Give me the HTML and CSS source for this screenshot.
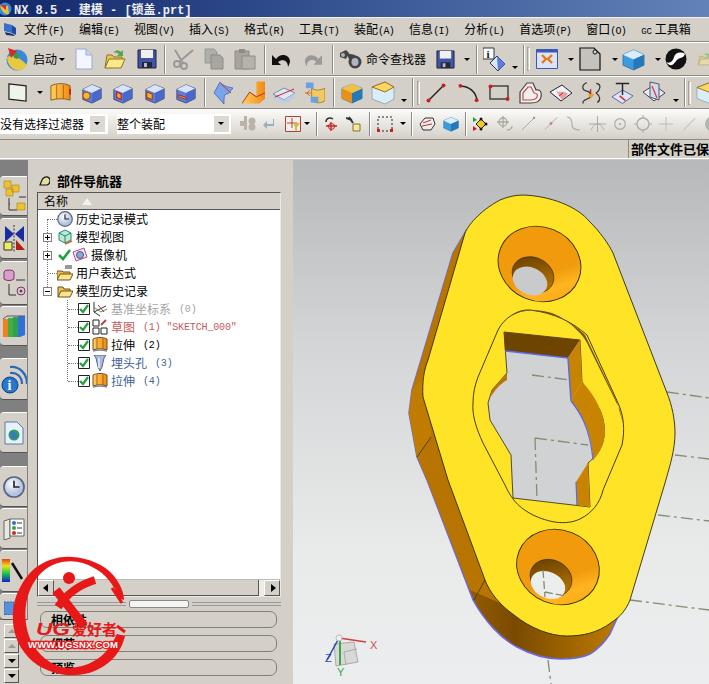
FILE: index.html
```html
<!DOCTYPE html>
<html lang="zh">
<head>
<meta charset="utf-8">
<title>NX 8.5 - 建模 - [锁盖.prt]</title>
<link rel="stylesheet" href="styles.css">
</head>
<body>
<svg class="defs" width="0" height="0">
  <defs>
    <linearGradient id="gFace" x1="0" y1="0" x2="1" y2="1"><stop offset="0" stop-color="#c8dcf8"/><stop offset="1" stop-color="#5f7fe0"/></linearGradient>
    <linearGradient id="gOr" x1="0" y1="0" x2="1" y2="0"><stop offset="0" stop-color="#ffd060"/><stop offset="1" stop-color="#f08a10"/></linearGradient>
    <linearGradient id="gCone" x1="0" y1="0" x2="1" y2="1"><stop offset="0" stop-color="#f09a0c"/><stop offset=".6" stop-color="#f09a0c"/><stop offset=".75" stop-color="#ffb420"/><stop offset="1" stop-color="#f8a010"/></linearGradient>
    <linearGradient id="gWall" x1="0" y1="0" x2="1" y2="1"><stop offset="0" stop-color="#5f3a00"/><stop offset="1" stop-color="#c88000"/></linearGradient>
    <linearGradient id="gSide" x1="0" y1="0" x2="1" y2="0"><stop offset="0" stop-color="#b87400"/><stop offset=".5" stop-color="#7a4a00"/><stop offset="1" stop-color="#c07c00"/></linearGradient>
    <radialGradient id="gClock" cx=".4" cy=".35"><stop offset="0" stop-color="#fff"/><stop offset="1" stop-color="#b4c4e0"/></radialGradient>
    <symbol id="cube" viewBox="0 0 24 24"><path d="M2 8 12 3l10 4v11l-10 5-10-4z" fill="#5c7ce0" stroke="#334" stroke-width=".8"/><path d="M2 8 12 3l10 4-10 5z" fill="#d8e4fa"/><path d="M12 12v11l10-5V7z" fill="#4a68cc"/></symbol>
    <symbol id="flat" viewBox="0 0 20 20"><path d="M1 1 19 3v16L1 17z" fill="#eef4ea" stroke="#222" stroke-width="1.3"/></symbol>
    <symbol id="doc" viewBox="0 0 18 22"><path d="M1 1h10l6 6v14H1z" fill="#f4f6ff" stroke="#99a8dd"/><path d="M11 1v6h6" fill="#cdd6f5" stroke="#99a8dd"/></symbol>
    <symbol id="open" viewBox="0 0 22 22"><path d="M1 20 3 7h5l2 2h8v2" fill="#e8c850" stroke="#8a7420"/><path d="M1 20 5 11h16l-4 9z" fill="#fbe88a" stroke="#8a7420"/><path d="M9 5c3-4 6-3 8-1l2-2v6h-6l2-2c-2-1-4-2-6-1z" fill="#5aa64a"/></symbol>
    <symbol id="save" viewBox="0 0 20 20"><path d="M1 1h18v18H1z" fill="#3f56a8" stroke="#223"/><path d="M4 1h12v8H4z" fill="#f0f0f0"/><path d="M5 13h10v6H5z" fill="#202838"/><path d="M7 14h3v4H7z" fill="#bbb"/></symbol>
    <symbol id="sciss" viewBox="0 0 22 22"><g fill="none" stroke="#999" stroke-width="2"><circle cx="5" cy="16" r="3"/><circle cx="12" cy="18" r="3"/><path d="M7 14 21 2M11 15 3 2"/></g></symbol>
    <symbol id="copy" viewBox="0 0 20 22"><path d="M1 1h9l3 3v11H1z" fill="#b0aea8" stroke="#999"/><path d="M7 7h9l3 3v11H7z" fill="#a8a6a0" stroke="#8a8a84"/></symbol>
    <symbol id="paste" viewBox="0 0 22 22"><path d="M1 3h14v18H1z" fill="#a8a49c" stroke="#8c8c86"/><path d="M5 1h6v4H5z" fill="#8c8c86"/><path d="M8 8h13v13H8z" fill="#b4b2aa" stroke="#8c8c86"/></symbol>
    <symbol id="undo" viewBox="0 0 21 18"><path d="M5 9c4-6 13-5 14 2 0 2-1 4-2 6 0-6-5-9-10-5l3 3H1V5z" fill="#111"/></symbol>
    <symbol id="redo" viewBox="0 0 21 18"><path d="M16 9C12 3 3 4 2 11c0 2 1 4 2 6 0-6 5-9 10-5l-3 3h9V5z" fill="#9a9a9a"/></symbol>
    <symbol id="bino" viewBox="0 0 23 22"><g fill="#444"><path d="M1 5 7 2l3 3-3 6-6-2z"/><path d="M7 5l9 2 2 5-7 1z"/><circle cx="16" cy="14" r="6.500"/></g><ellipse cx="16" cy="14" rx="3.500" ry="4" fill="#aeb4c0"/><circle cx="4" cy="7" r="2" fill="#aeb4c0"/></symbol>
    <symbol id="info" viewBox="0 0 22 24"><path d="M0 1h11v11H0z" fill="#fff" stroke="#334"/><text x="3.500" y="10.500" font-family="Liberation Serif" font-weight="700" font-size="11" fill="#111">i</text><path d="M7 16 14 9l8 8-7 7z" fill="#d8e4fa" stroke="#334"/><path d="M14 9l8 8-7 7z" fill="#5c7ce0"/></symbol>
    <symbol id="fit" viewBox="0 0 22 20"><path d="M.5.5h21v19H.500z" fill="#dbe4f6" stroke="#3a58b4"/><path d="M.5.5h21v3H.500z" fill="#3a58b4"/><path d="M6 6l4 4-4 4M16 6l-4 4 4 4" fill="none" stroke="#e87818" stroke-width="2.400"/></symbol>
    <symbol id="note" viewBox="0 0 22 24"><path d="M1 1h14l6 6v16H1z" fill="#c4c2bc" stroke="#111" stroke-width="1.200"/><circle cx="16" cy="5" r="2" fill="#ddd" stroke="#111"/></symbol>
    <symbol id="blue" viewBox="0 0 24 24"><path d="M1 7 12 2l11 5v11l-11 5-11-5z" fill="#3c9ae0" stroke="#2a6890" stroke-width=".7"/><path d="M1 7 12 2l11 5-11 5z" fill="#d6eeff"/><path d="M12 12v11l11-5V7z" fill="#2678b8"/></symbol>
    <symbol id="ball" viewBox="0 0 22 22"><circle cx="11" cy="11" r="10.500" fill="#111"/><path d="M1 14c4 2 7-1 8-5s6-6 11-3c-2 5-5 3-8 6s-5 9-11 2" fill="#fff"/></symbol>
    <symbol id="box" viewBox="0 0 24 24"><path d="M2 5c6-3 15-3 20 0v15c-5-2-14-2-20 0z" fill="url(#gOr)" stroke="#8a5c20"/><path d="M8 4v15M15 4v15" stroke="#b06a10" fill="none"/><path d="M22 14V8" stroke="#c00" stroke-width="1.500"/></symbol>
    <symbol id="sweep" viewBox="0 0 22 24"><path d="M3 12 9 1c3 4 8 5 13 6l-5 6c-4-1-4 3-4 10z" fill="#7aa4ea" stroke="#3a58b4" stroke-width=".7"/><path d="M10 3l10 9" stroke="#d03030"/></symbol>
    <symbol id="blend" viewBox="0 0 24 24"><path d="M0 23 8 11l7 4V0h9v18l-6 5z" fill="url(#gOr)"/><path d="M0 23 8 11l7 5 9-4" fill="none" stroke="#b03020"/></symbol>
    <symbol id="plane" viewBox="0 0 24 20"><path d="M1 11 12 5l11 5-11 7z" fill="#dfe6f5" stroke="#7a8aa8"/><path d="M1 15 12 21l11-6v-5l-11 7-11-5z" fill="#bfcce6"/><path d="M3 14 22 6" stroke="#d02020" stroke-width="1"/></symbol>
    <symbol id="trim" viewBox="0 0 22 24"><path d="M8 7c5 3 9 2 14 0v13c-4 3-9 3-14 0z" fill="#f4c860" stroke="#a88020"/><path d="M2 1h8v6H2zM7 16h8v6H7z" fill="#6aa0e8"/><path d="M7 12H1m5-3-3 3 3 3" stroke="#e06010" fill="none"/></symbol>
    <symbol id="box2" viewBox="0 0 24 24"><path d="M1 6 14 1l9 5v12l-9 5-13-5z" fill="#d8eef8" stroke="#9ab"/><path d="M1 6 14 1l9 5-9 5z" fill="#f8d860" stroke="#a06820"/></symbol>
    <symbol id="line" viewBox="0 0 20 20"><path d="M2 18 18 2" stroke="#222" stroke-width="1.500"/><circle cx="2.500" cy="17.500" r="2" fill="#c82020"/><circle cx="17.500" cy="2.500" r="2" fill="#c82020"/></symbol>
    <symbol id="arc" viewBox="0 0 22 20"><path d="M2 3c9-1 17 6 18 15" fill="none" stroke="#222" stroke-width="1.500"/><circle cx="2.500" cy="2.500" r="2" fill="#c82020"/><circle cx="19.500" cy="17.500" r="2" fill="#c82020"/></symbol>
    <symbol id="rect" viewBox="0 0 22 18"><path d="M2 2h18v13H2z" fill="none" stroke="#444" stroke-width="1.500"/><circle cx="2.500" cy="2.500" r="2" fill="#c82020"/><circle cx="19.500" cy="15" r="2" fill="#c82020"/></symbol>
    <symbol id="heart" viewBox="0 0 23 22"><path d="M1 10 8 1h6l3 7c4-1 6 2 5 7-1 5-6 6-10 6H1z" fill="#eee" stroke="#444" stroke-width="1.200"/><path d="M4 11 9 5h3l3 6c3 0 4 2 3 4s-4 3-7 3H4z" fill="none" stroke="#c84848" stroke-width="1.200"/></symbol>
    <symbol id="wave" viewBox="0 0 24 18"><path d="M1 8 13 1l10 8-11 8z" fill="#eef2fb" stroke="#223"/><path d="M7 7c5 2 8-1 12 3l-6 6z" fill="#e8a0a0"/><path d="M10 12l4-3" stroke="#c82020"/></symbol>
    <symbol id="curve" viewBox="0 0 22 24"><path d="M6 1C0 4 1 9 6 10s6 6 1 8-5 3-5 5M16 2c6 1 4 7 0 10 4 3 5 8 1 10" fill="none" stroke="#333" stroke-width="1.300"/><path d="M10 8v9" stroke="#c82020" stroke-width="1.500"/><path d="M7 13h7l-3.500 5z" fill="#e8a020"/></symbol>
    <symbol id="thru" viewBox="0 0 24 24"><path d="M1 16 12 9l11 6-11 8z" fill="#dfe6f5" stroke="#56a"/><path d="M5 2h14M12 2v12" stroke="#223" stroke-width="1.500"/><path d="M9 15l6 5" stroke="#d03030" stroke-width="1.500"/></symbol>
    <symbol id="sect" viewBox="0 0 24 24"><path d="M1 11 12 4l11 8-11 8z" fill="#e8ecf6" stroke="#445"/><path d="M8 1l9 2v16l-9-3z" fill="#d0dcf0" stroke="#556"/><path d="M10 5l5 12" stroke="#d04040" stroke-width="1.300"/></symbol>
    <symbol id="clock" viewBox="0 0 16 16"><circle cx="8" cy="8" r="7.300" fill="url(#gClock)" stroke="#56657e" stroke-width="1.200"/><path d="M8 3.500V8h4" fill="none" stroke="#222" stroke-width="1.200"/></symbol>
    <symbol id="folder" viewBox="0 0 16 14"><path d="M1 13V3h5l1 2h6v2" fill="#f2c04c" stroke="#6a5018"/><path d="M1 13 4 7h12l-3 6z" fill="#fbe58a" stroke="#6a5018"/></symbol>
    <symbol id="ext" viewBox="0 0 16 16"><path d="M1 2c4-2 10-2 14 0v11c-4-1.500-10-1.500-14 0z" fill="url(#gOr)" stroke="#704c20"/><path d="M5 1.500v11M11 1.500v11" stroke="#a86010" fill="none"/><path d="M1 14c4-1 10-1 14 0" stroke="#7a88a8" stroke-width="1.300" fill="none"/></symbol>
    <symbol id="chk" viewBox="0 0 12 12"><path d="M.5.500h11v11H.500z" fill="#fff" stroke="#222"/><path d="M2 6l3 3 5-7" fill="none" stroke="#25a040" stroke-width="2.200"/></symbol>
    <symbol id="gsnap" viewBox="0 0 18 18"><circle cx="9" cy="9" r="6" fill="none" stroke="#aaa" stroke-width="1.300"/><circle cx="9" cy="9" r="1" fill="#999"/></symbol>
  </defs>
</svg>

<header class="title">
  <svg class="title-ic" width="12" height="14" viewBox="0 0 12 14"><circle cx="5" cy="7" r="6.500" fill="#3a8ad8"/><path d="M0 3l8 1 1 8c-4 1-8-3-9-9z" fill="#e8c040"/><path d="M0 3h6v5z" fill="#d03030"/></svg>
  <span>NX 8.5 - 建模 - [锁盖.prt]</span>
</header>

<nav class="menu">
  <svg class="menu-ic" width="16" height="16" viewBox="0 0 16 16"><path d="M2 1l8 2v8l-8-2z" fill="#3a70c8"/><path d="M10 3l4 3v7l-4-2z" fill="#234a98"/><path d="M3 10l8 2 2 2-9-1z" fill="#1a3470"/></svg>
  <span>文件<b class="k">(F)</b></span><span>编辑<b class="k">(E)</b></span><span>视图<b class="k">(V)</b></span><span>插入<b class="k">(S)</b></span><span>格式<b class="k">(R)</b></span><span>工具<b class="k">(T)</b></span><span>装配<b class="k">(A)</b></span><span>信息<b class="k">(I)</b></span><span>分析<b class="k">(L)</b></span><span>首选项<b class="k">(P)</b></span><span>窗口<b class="k">(O)</b></span><span class="gc"><i class="gc-k">GC</i> 工具箱</span>
</nav>

<div class="bar bar1">
  <svg class="m5" width="24" height="24" viewBox="0 0 24 24"><circle cx="12" cy="13" r="10.500" fill="#3a88d8"/><path d="M2 10c7-3 14 2 20 8-4 6-10 6-14 4C4 19 2 15 2 10z" fill="#e8c840"/><path d="M8 4l6 3-1 5-4-1z" fill="#3a9a40"/><path d="M3 1l9 3-6 7z" fill="#d82828"/></svg>
  <span class="tx m4">启动</span><i class="caret m2"></i>
  <svg class="m10" width="18" height="22"><use href="#doc"/></svg>
  <svg class="m11" width="22" height="22"><use href="#open"/></svg>
  <svg class="m11" width="20" height="20"><use href="#save"/></svg>
  <i class="sep m7"></i>
  <svg class="m6" width="22" height="22"><use href="#sciss"/></svg>
  <svg class="m10" width="20" height="22"><use href="#copy"/></svg>
  <svg class="m10" width="22" height="22"><use href="#paste"/></svg>
  <i class="sep m8"></i>
  <svg class="m5" width="21" height="18"><use href="#undo"/></svg>
  <svg class="m11" width="20" height="18"><use href="#redo"/></svg>
  <i class="sep m9"></i>
  <svg class="m5" width="23" height="22"><use href="#bino"/></svg>
  <span class="tx m4">命令查找器</span>
  <svg class="m10" width="19" height="19"><use href="#save"/></svg>
  <i class="caret m9"></i>
  <i class="sep m6"></i>
  <svg class="m5" width="22" height="24"><use href="#info"/></svg>
  <i class="caret low m7"></i>
  <i class="sep m5"></i><i class="grip m2"></i>
  <svg class="m6" width="22" height="20"><use href="#fit"/></svg>
  <i class="caret m10"></i>
  <svg class="m5" width="22" height="24"><use href="#note"/></svg>
  <i class="caret m11"></i>
  <svg class="m4" width="23" height="23"><use href="#blue"/></svg>
  <i class="caret m10"></i>
  <svg class="m4" width="22" height="22"><use href="#ball"/></svg>
  <svg class="m10 fade" width="16" height="20" viewBox="0 0 22 20"><use href="#open"/></svg>
</div>

<div class="bar bar2">
  <svg class="m8" width="19" height="21"><use href="#flat"/></svg>
  <i class="caret m10"></i>
  <svg class="m6" width="23" height="23"><use href="#box"/></svg>
  <svg class="m9" width="22" height="22" viewBox="0 0 24 24"><use href="#cube" width="24" height="24"/><circle cx="6" cy="15" r="4" fill="#f4b830" stroke="#a04010"/></svg>
  <svg class="m9" width="22" height="22" viewBox="0 0 24 24"><use href="#cube" width="24" height="24"/><path d="M5 11l5 2v6l-5-2z" fill="#f0a040" stroke="#b02020" stroke-width="1.200"/></svg>
  <svg class="m10" width="22" height="22" viewBox="0 0 24 24"><use href="#cube" width="24" height="24"/><path d="M3 11l6 2v6l-6-2z" fill="#f4b030" stroke="#a04010" stroke-width="1.200"/></svg>
  <svg class="m9" width="22" height="22" viewBox="0 0 24 24"><use href="#cube" width="24" height="24"/><path d="M4 14l8 3v2l-8-3z" fill="#f4b030" stroke="#b02020" stroke-width="1"/></svg>
  <i class="sep m7"></i>
  <svg class="m5" width="22" height="24"><use href="#sweep"/></svg>
  <svg class="m9" width="23" height="24"><use href="#blend"/></svg>
  <svg class="m7" width="24" height="20"><use href="#plane"/></svg>
  <svg class="m8" width="21" height="24"><use href="#trim"/></svg>
  <i class="sep m8"></i>
  <svg class="m6" width="22" height="22" viewBox="0 0 24 24"><use href="#blue" width="24" height="24"/><path d="M1 7 12 2l11 5-11 5z" fill="#f4c040"/><path d="M1 7l11 5v11L1 18z" fill="#e89018"/></svg>
  <svg class="m8" width="24" height="24"><use href="#box2"/></svg>
  <i class="caret low m6"></i>
  <i class="sep m5"></i><i class="grip m3"></i>
  <svg class="m6" width="20" height="20"><use href="#line"/></svg>
  <svg class="m12" width="21" height="20"><use href="#arc"/></svg>
  <svg class="m9" width="22" height="18"><use href="#rect"/></svg>
  <svg class="m9" width="23" height="22"><use href="#heart"/></svg>
  <svg class="m7" width="24" height="18"><use href="#wave"/></svg>
  <svg class="m8" width="21" height="24"><use href="#curve"/></svg>
  <svg class="m9" width="23" height="24"><use href="#thru"/></svg>
  <svg class="m8" width="24" height="24"><use href="#sect"/></svg>
  <i class="caret low m7"></i>
  <i class="sep m5"></i><i class="grip m2"></i>
  <svg class="m5" width="22" height="24" viewBox="0 0 22 24"><use href="#box2"/></svg>
</div>

<div class="bar bar3">
  <div class="drop d1"><span>没有选择过滤器</span><i class="drop-btn"></i></div>
  <div class="drop d2"><span>整个装配</span><i class="drop-btn"></i></div>
  <svg class="m9" width="16" height="16" viewBox="0 0 16 16"><g fill="#b8b4a8"><rect x="4" y="0" width="3" height="14"/><circle cx="12" cy="5" r="3.500"/><circle cx="12" cy="11" r="3.500"/><rect y="5" width="4" height="5"/></g></svg>
  <svg class="m7" width="11" height="11" viewBox="0 0 11 11"><path d="M10 1v5H4V3L0 7l4 4V8h7V1z" fill="#9ab0b8"/></svg>
  <svg class="m11" width="16" height="16" viewBox="0 0 16 16"><path d="M.5.500h15v15H.500z" fill="#f0f0e8" stroke="#b04040"/><path d="M7 2v10M2 7h10" stroke="#b04040"/><path d="M8 7h7l-3 4v4l-2-1v-3z" fill="#d8b840"/></svg>
  <i class="caret m3"></i>
  <i class="sep tall m6"></i>
  <svg class="m6" width="14" height="16" viewBox="0 0 14 16"><path d="M2 6c0-4 4-5 7-3" fill="none" stroke="#333" stroke-width="1.500"/><path d="M7 6v9M2 10h11" stroke="#c82020" stroke-width="1.300"/><circle cx="7.500" cy="10.500" r="3" fill="none" stroke="#c82020"/></svg>
  <svg class="m8" width="15" height="16" viewBox="0 0 15 16"><path d="M0 2l6 2M3 1l4 6" stroke="#333" stroke-width="2"/><path d="M7 8h7v7H7z" fill="#f0e8a0" stroke="#887030"/></svg>
  <i class="sep tall m8"></i>
  <svg class="m6" width="16" height="16" viewBox="0 0 16 16"><path d="M1 1h14v14H1z" fill="none" stroke="#222" stroke-dasharray="2 2"/><rect x="0" y="13" width="3" height="3" fill="#c82020"/><rect x="13" y="13" width="3" height="3" fill="#c82020"/></svg>
  <i class="caret m7"></i>
  <i class="sep tall m5"></i>
  <svg class="m6" width="17" height="16" viewBox="0 0 17 16"><path d="M1 8 6 2h8l2 6-4 6H4z" fill="#eee" stroke="#333"/><path d="M4 7l8-3M3 10l10-2" stroke="#c83030"/></svg>
  <svg class="m7" width="16" height="16"><use href="#blue"/></svg>
  <i class="sep tall m6"></i>
  <svg class="m6" width="16" height="16" viewBox="0 0 16 16"><path d="M8 3 13 8 8 13 3 8z" fill="#f4c820" stroke="#222"/><g fill="#111"><circle cx="8" cy="3" r="1.500"/><circle cx="13" cy="8" r="1.500"/><circle cx="8" cy="13" r="1.500"/></g><path d="M0 1l4 3-4 2z" fill="#20a030"/><path d="M0 10l4 3-4 2z" fill="#c02020"/></svg>
  <svg class="m7" width="17" height="16" viewBox="0 0 17 16"><g fill="none" stroke="#a8aaa0" stroke-width="1.300"><circle cx="7" cy="6" r="4"/><path d="M7 0v12M1 6h12"/><path d="M11 14c3 0 5-2 5-4"/></g></svg>
  <svg class="m8" width="15" height="15" viewBox="0 0 15 15"><path d="M1 14 14 1" stroke="#aaa"/><circle cx="13" cy="2" r="1.200" fill="#b88"/></svg>
  <svg class="m8" width="14" height="15" viewBox="0 0 15 15"><path d="M1 14 14 1" stroke="#aaa"/><circle cx="7.500" cy="7.500" r="1.500" fill="#b88"/></svg>
  <svg class="m8" width="15" height="16" viewBox="0 0 15 16"><path d="M1 1c5 0 5 5 5 8s3 5 8 5" fill="none" stroke="#aaa" stroke-width="1.200"/></svg>
  <svg class="m8" width="17" height="16" viewBox="0 0 17 16"><path d="M8.500 0v16M0 8h17M2 14c2-4 4-6 6.500-6S13 10 15 14" fill="none" stroke="#aaa"/></svg>
  <svg class="m6" width="16" height="16"><use href="#gsnap"/></svg>
  <svg class="m6" width="18" height="18" viewBox="0 0 18 18"><circle cx="9" cy="9" r="6" fill="none" stroke="#aaa" stroke-width="1.300"/><path d="M9 0v3M9 15v3M0 9h3M15 9h3" stroke="#aaa"/></svg>
  <svg class="m7" width="14" height="14" viewBox="0 0 14 14"><path d="M7 0v14M0 7h14" stroke="#bbb"/></svg>
  <svg class="m10" width="13" height="14" viewBox="0 0 15 15"><path d="M1 14 14 1" stroke="#aaa"/></svg>
  <svg class="m8" width="14" height="16" viewBox="0 0 14 16"><ellipse cx="8" cy="8" rx="7" ry="7.500" fill="#b4b4b0"/></svg>
</div>

<div class="status"><div class="status-msg">部件文件已保</div></div>

<main class="work">
  <aside class="rail">
    <div class="tab t1"><svg width="24" height="32" viewBox="0 0 24 32"><path d="M2 1h7v7H2zM10 5h7v7h-7zM4 9h7v7H4z" fill="#f0c030" stroke="#a08020" stroke-width=".6"/><path d="M7 18v12h8M7 24h1M17 17h7" stroke="#333" fill="none"/><path d="M15 23h8v7h-8z" fill="#f0c030" stroke="#a08020" stroke-width=".6"/></svg></div>
    <div class="tab t2"><svg width="24" height="28" viewBox="0 0 24 28"><path d="M3 1l9 8-9 8zM22 1l-9 8 9 8z" fill="#1a2ca0"/><path d="M12 0v28" stroke="#333" stroke-dasharray="2 1.500"/><path d="M2 17h8v8H2z" fill="#f0ec60" stroke="#333"/><path d="M14 25V15l9 10z" fill="#b02010"/></svg></div>
    <div class="tab t3"><svg width="24" height="28" viewBox="0 0 24 28"><ellipse cx="7" cy="3" rx="5" ry="2" fill="#d8a0c8" stroke="#803070"/><path d="M2 3v7c2 2 8 2 10 0V3" fill="#d8a0c8" stroke="#803070"/><path d="M14 11h9M7 15v11h7" stroke="#333" fill="none"/><circle cx="19" cy="22" r="4" fill="none" stroke="#803070"/><circle cx="19" cy="22" r="1.500" fill="#803070"/></svg></div>
    <div class="tab t4"><svg width="24" height="24" viewBox="0 0 24 24"><path d="M1 5h6v18H1z" fill="#f08020"/><path d="M6 4h6v19H6z" fill="#40b040"/><path d="M11 3h6v20h-6z" fill="#30a050"/><path d="M16 2h7v19l-5 2h-2z" fill="#3070d8"/><path d="M1 5l4-3h18" fill="none" stroke="#557"/></svg></div>
    <div class="tab t5"><svg width="26" height="30" viewBox="0 0 26 30"><circle cx="9" cy="21" r="8" fill="#2878d0" stroke="#0a3a80"/><text x="6.500" y="26" font-family="Liberation Serif" font-weight="700" font-size="14" fill="#fff">i</text><path d="M9 9c7-1 12 4 12 11M9 3c10-1 17 7 17 17M9 14c4 0 7 3 7 6" fill="none" stroke="#2a68b8" stroke-width="2.200"/></svg></div>
    <div class="tab t6"><svg width="20" height="24" viewBox="0 0 20 24"><path d="M1 1h12l6 6v16H1z" fill="#e8f0fa" stroke="#5a7aa8"/><circle cx="10" cy="14" r="5.500" fill="#30a060"/><path d="M7 10c3 0 5 2 7 5l-4 4c-3-2-4-5-3-9z" fill="#3878c0"/></svg></div>
    <div class="tab t7"><svg width="22" height="22" viewBox="0 0 16 16"><use href="#clock"/></svg></div>
    <div class="tab t8"><svg width="22" height="22" viewBox="0 0 22 22"><path d="M1 3 7 1v19l-6 2z" fill="#e8e8e0" stroke="#666"/><path d="M7 1h14v17H7z" fill="#fff" stroke="#666"/><circle cx="11" cy="5" r="2" fill="#3070c0"/><circle cx="11" cy="10" r="2" fill="#40a040"/><circle cx="11" cy="15" r="2" fill="#c03020"/><path d="M14 5h5M14 10h5M14 15h5" stroke="#333"/></svg></div>
    <div class="tab t9"><svg width="24" height="26" viewBox="0 0 24 26"><defs><linearGradient id="gRb" x1="0" y1="0" x2="0" y2="1"><stop offset="0" stop-color="#e84010"/><stop offset=".3" stop-color="#f0e020"/><stop offset=".6" stop-color="#20d040"/><stop offset="1" stop-color="#1020d0"/></linearGradient></defs><path d="M0 1h8v23H0z" fill="url(#gRb)"/><path d="M10 5l10 16" stroke="#111" stroke-width="2.500"/></svg></div>
    <div class="tab t10"><svg width="14" height="16" viewBox="0 0 14 16"><path d="M0 3h10v13H0z" fill="#5a90d8" stroke="#2a5aa8" stroke-dasharray="2 1"/></svg></div>
    <div class="spin">
      <i class="spin-btn up"></i><i class="spin-btn up"></i><i class="spin-btn dn"></i><i class="spin-btn dn end"></i>
    </div>
  </aside>

  <section class="panel">
    <div class="panel-h"><svg width="11" height="11" viewBox="0 0 11 11"><path d="M1 9 3 4c1-3 5-4 7-2s1 6-2 7z" fill="#e8e0a0" stroke="#111" stroke-width="1.200"/></svg><span>部件导航器</span></div>
    <div class="tree-box">
      <div class="tree-head"><span>名称</span><i class="sort"></i></div>
      <div class="tree">
        <div class="vl v0"></div>
        <div class="vl v1"></div>
        <div class="row"><i class="dot"></i><svg class="ni" width="16" height="16"><use href="#clock"/></svg><span class="lbl">历史记录模式</span></div>
        <div class="row"><i class="plus"></i><svg class="ni" width="16" height="16" viewBox="0 0 16 16"><path d="M8 1l6 3v7l-6 3-6-3V4z" fill="#bfe8d8" stroke="#208a70"/><path d="M2 4l6 3 6-3M8 7v7" fill="none" stroke="#208a70"/><path d="M8 15l7-3" stroke="#d06020" stroke-width="1.500"/></svg><span class="lbl">模型视图</span></div>
        <div class="row"><i class="plus"></i><svg class="tick" width="13" height="12" viewBox="0 0 13 12"><path d="M1 6l4 4 7-9" fill="none" stroke="#22a040" stroke-width="2.600"/></svg><svg class="cam" width="16" height="16" viewBox="0 0 16 16"><path d="M1 5 12 1l3 9-11 4z" fill="#f4e0f0" stroke="#b05090"/><circle cx="8" cy="8" r="3.500" fill="#8aa8d8" stroke="#557"/></svg><span class="lbl cam-l">摄像机</span></div>
        <div class="row"><i class="dot"></i><svg class="ni" width="16" height="16" viewBox="0 0 16 16"><path d="M8 1h7M8 3h7" stroke="#333"/><path d="M0 15V6h5l1 1h7v2" fill="#f2c04c" stroke="#6a5018"/><path d="M0 15l3-6h13l-3 6z" fill="#fbe58a" stroke="#6a5018"/></svg><span class="lbl">用户表达式</span></div>
        <div class="row"><i class="plus minus"></i><svg class="ni" width="16" height="14"><use href="#folder"/></svg><span class="lbl">模型历史记录</span></div>
        <div class="row sub gray"><i class="dot2"></i><svg class="box" width="12" height="12"><use href="#chk"/></svg><svg class="fi" width="16" height="16" viewBox="0 0 16 16"><path d="M2 1v10l6 4M2 11l12-6" fill="none" stroke="#333"/><path d="M3 7l6 4 6-3" fill="none" stroke="#50a060"/><path d="M6 4l6 7" stroke="#c03030"/></svg><span class="lbl">基准坐标系</span><span class="arg">(0)</span></div>
        <div class="row sub red"><i class="dot2"></i><svg class="box" width="12" height="12"><use href="#chk"/></svg><svg class="fi" width="16" height="16" viewBox="0 0 16 16"><path d="M1 1h6v6H1zM1 9h6v6H1zM9 9h6v6H9z" fill="#fff" stroke="#222"/><path d="M9 6l5-5" stroke="#c04040" stroke-width="2"/></svg><span class="lbl">草图</span><span class="arg">(1) "SKETCH_000"</span></div>
        <div class="row sub"><i class="dot2"></i><svg class="box" width="12" height="12"><use href="#chk"/></svg><svg class="fi" width="16" height="16"><use href="#ext"/></svg><span class="lbl">拉伸</span><span class="arg">(2)</span></div>
        <div class="row sub blue-t"><i class="dot2"></i><svg class="box" width="12" height="12"><use href="#chk"/></svg><svg class="fi" width="16" height="16" viewBox="0 0 16 16"><path d="M2 0h12l-2 3-2 9-2 4-2-4-2-9z" fill="#a8b8d8" stroke="#556688"/><path d="M7 3v10" stroke="#eef" stroke-width="1.500"/></svg><span class="lbl">埋头孔</span><span class="arg">(3)</span></div>
        <div class="row sub blue-t"><i class="dot2"></i><svg class="box" width="12" height="12"><use href="#chk"/></svg><svg class="fi" width="16" height="16"><use href="#ext"/></svg><span class="lbl">拉伸</span><span class="arg">(4)</span></div>
      </div>
      <div class="hscroll"><i class="sb-btn left"></i><div class="sb-track"></div><div class="sb-rest"></div><i class="sb-btn right"></i></div>
    </div>
    <div class="splitter"><i></i><b></b><i></i></div>
    <div class="acc"><strong>相依性</strong></div>
    <div class="acc"><strong>细节</strong></div>
    <div class="acc"><strong>预览</strong></div>
  </section>

  <section class="view">
    <svg class="scene" viewBox="293 160 416 524" width="416" height="524">
      <g fill="none" stroke="#8a8a72" stroke-width="1.300" stroke-dasharray="12 4 3 4">
        <path d="M667 392 709 398M675 455 709 459M658 515 709 521M630 600 709 610M548 660 551 684"/>
      </g>
      <!-- side of the body -->
      <path d="M466 231 453 253 412 390 409 413 417 457 427 480 473 600C484 620 500 638 517 647 532 655 546 659 560 659 572 659 582 658 590 654 600 648 606 640 610 634L620 612Z" fill="url(#gSide)" stroke="#6a6ae0" stroke-width="1.500"/>
      <path d="M466 231 453 253 412 390 409 413 417 457 427 480 470 590 500 603 448 480 423 397Z" fill="#b87400"/>
      <path d="M428 372 412 390 409 413 417 457 431 437Z" fill="#c07c00"/>
      <!-- top face -->
      <path d="M523 195C550 196 577 206 590 222 600 232 608 243 613 253L667 393C672 405 675 420 675 433 675 450 670 465 665 483L630 600C626 610 620 617 612 622 598 633 582 636 567 636 550 636 530 628 514 615 500 605 490 593 485 580L448 480 423 397C422 382 424 370 428 360L465 233C468 226 478 212 500 200 507 197 515 195 523 195Z" fill="#ffe326" stroke="#2c2a10" stroke-width=".9"/>
      <path d="M431 437 417 457M485 580 474 600" stroke="#333" stroke-width=".8" fill="none"/>
      <!-- upper hole -->
      <ellipse cx="539.500" cy="264" rx="42" ry="37" transform="rotate(22 539.500 264)" fill="url(#gCone)" stroke="#2c2a10" stroke-width=".9"/>
      <ellipse cx="533" cy="275" rx="21.500" ry="17.500" transform="rotate(25 533 275)" fill="url(#gWall)" stroke="#2c2a10" stroke-width=".6"/>
      <ellipse cx="530" cy="281" rx="18" ry="13.500" transform="rotate(25 530 281)" fill="#c8cacb"/>
      <!-- lower hole -->
      <ellipse cx="558" cy="567" rx="42" ry="37" transform="rotate(22 558 567)" fill="url(#gCone)" stroke="#2c2a10" stroke-width=".9"/>
      <ellipse cx="551" cy="578" rx="21.500" ry="18" transform="rotate(25 551 578)" fill="url(#gWall)" stroke="#2c2a10" stroke-width=".6"/>
      <ellipse cx="548" cy="585" rx="18" ry="13" transform="rotate(25 548 585)" fill="#eceded"/>
      <path d="M543 570 545 597M545 592 565 596" fill="none" stroke="#8a8a72" stroke-width="1.300" stroke-dasharray="8 3"/>
      <!-- pocket outline -->
      <path d="M530 310C555 313 572 322 587 335L618 403C624 416 625 430 622 445L603 490C600 503 592 513 580 519 565 526 548 522 533 515 522 509 513 503 505 485L483 443C476 428 472 415 473 403 473 393 475 385 478 377L498 330C504 318 518 309 530 310Z" fill="#ffe326" stroke="#2c2a10" stroke-width=".9"/>
      <path d="M510 317C525 307 548 309 562 318 572 325 582 333 587 343L620 410 624 427 617 402 585 335C572 322 555 313 530 310 520 310 515 313 510 317Z" fill="#7a4e00"/>
      <!-- opening -->
      <path d="M504 332 580 340 582 382 600 410C604 420 606 430 603 442 600 452 594 458 588 463L590 507 513 498 511 455 490 420 488 403 492 390 507 373Z" fill="#d0d2d3" stroke="#2c2a10" stroke-width=".8"/>
      <path d="M532 375 570 380M535 438 588 445M535 438 537 500" fill="none" stroke="#8a8a72" stroke-width="1.300" stroke-dasharray="12 4 3 4"/>
      <path d="M504 332 580 340 568 358 505 351Z" fill="#6e4500"/>
      <path d="M580 340 582 382 571 401 568 358Z" fill="#c88400"/>
      <path d="M505 351 568 358" stroke="#5a6ae8" stroke-width="1.500"/>
      <path d="M568 358 571 401" stroke="#5a6ae8" stroke-width="1.500"/>
      <path d="M582 382C594 394 604 412 605 430 605 443 600 453 593 460 592 440 588 425 571 401Z" fill="#c88400"/>
      <path d="M571 401C580 412 590 428 593 460" fill="none" stroke="#5a6ae8" stroke-width="1.200"/>
      <path d="M507 373 492 390 490 398C495 390 500 384 507 380Z" fill="#b87800"/>
      <path d="M588 463 590 507 577 505 576 482Z" fill="#c88400"/>
      <path d="M576 482 577 505" stroke="#5a6ae8" stroke-width="1.200"/>
      <!-- triad -->
      <g class="triad">
        <path d="M334 644 354 642 358 662 336 666Z" fill="#d8d8d6" stroke="#aaa"/>
        <path d="M344 652 357 649M344 652 346 665" stroke="#aaa" fill="none"/>
        <path d="M339 638 366 642" stroke="#d04040" stroke-width="1.500"/>
        <path d="M339 638 327 660" stroke="#2848b0" stroke-width="1.500"/>
        <path d="M340 638 340 665" stroke="#38a848" stroke-width="2"/>
        <circle cx="339" cy="638" r="3" fill="#f0f0f0" stroke="#bbb"/>
        <text x="370" y="649" fill="#d05050" font-family="Liberation Sans" font-size="11">X</text>
        <text x="325" y="662" fill="#2848b0" font-family="Liberation Sans" font-size="11">Z</text>
        <text x="337" y="676" fill="#38a848" font-family="Liberation Sans" font-size="11">Y</text>
      </g>
    </svg>
  </section>
</main>

<svg class="stamp" viewBox="10 553 120 126" width="120" height="126">
  <path fill-rule="evenodd" fill="#e81818" d="M72 557C88 558 104 564 114 576 120 584 124 592 124 600L118 598C115 586 106 574 94 568 84 562 74 560 62 562 46 565 36 576 30 590 24 604 24 622 29 636 34 650 46 662 60 667 72 669 84 667 94 661 104 656 112 645 117 634L125 636C122 648 116 658 104 666 92 674 78 676 66 675 50 673 34 666 24 652 15 640 12 626 13 612 14 596 22 580 34 569 44 561 58 556 72 557Z"/>
  <path d="M112 588 122 603M117 626 125 632" stroke="#e81818" stroke-width="3" fill="none"/>
  <circle cx="69" cy="578" r="6" fill="#e81818"/>
  <path d="M56 590 84 626" stroke="#e81818" stroke-width="9" fill="none"/>
  <path d="M95 580C82 584 68 592 58 607" stroke="#e81818" stroke-width="8" fill="none"/>
  <text class="stamp-ug" x="36" y="635" textLength="34" lengthAdjust="spacingAndGlyphs">UG</text>
  <text class="stamp-cn" x="72" y="635">爱好者</text>
  <text class="stamp-url" x="28" y="648">WWW.UGSNX.COM</text>
</svg>
</body>
</html>
```
FILE: styles.css
```css
* { box-sizing: border-box; }
html, body { margin: 0; padding: 0; }
body {
  position: relative;
  width: 709px;
  height: 684px;
  overflow: hidden;
  display: flex;
  flex-direction: column;
  background: #d4d0c8;
  color: #000;
  font: 12px/1 "Noto Sans CJK SC", sans-serif;
}
.defs { position: absolute; }
svg { display: block; flex: none; }
i { font-style: normal; display: block; flex: none; }

.title {
  height: 18px;
  flex: none;
  display: flex;
  align-items: center;
  gap: 2px;
  border-bottom: 1px solid #f0f0f0;
  background: linear-gradient(90deg, #12286c, #3c5a98 55%, #6282b8);
  color: #f0f0f0;
  font: 700 12px "Liberation Mono", "Noto Sans CJK SC", monospace;
  white-space: pre;
}
.menu {
  height: 24px;
  flex: none;
  display: flex;
  align-items: center;
  gap: 15px;
  padding-left: 2px;
  border-bottom: 1px solid #8c8a84;
  white-space: nowrap;
}
.menu-ic { margin-right: -9px; }
.k { display: inline-block; width: 16px; font: 400 10px "Liberation Mono", monospace; letter-spacing: -.7px; }
.gc-k { display: inline; font: 400 9px "Liberation Mono", monospace; }

.bar {
  flex: none;
  display: flex;
  align-items: center;
  white-space: nowrap;
  overflow: hidden;
  border-bottom: 1px solid #8c8a84;
  border-top: 1px solid #fff;
}
.bar1 { height: 34px; }
.bar2 { height: 33px; }
.bar3 { height: 31px; padding-bottom: 2px; background: linear-gradient(#fbfaf8, #d4d0c8); }
.m2 { margin-left: 2px; } .m3 { margin-left: 3px; } .m4 { margin-left: 4px; }
.m5 { margin-left: 5px; } .m6 { margin-left: 6px; } .m7 { margin-left: 7px; }
.m8 { margin-left: 8px; } .m9 { margin-left: 9px; } .m10 { margin-left: 10px; }
.m11 { margin-left: 11px; } .m12 { margin-left: 12px; }
.tx { flex: none; }
.caret { width: 0; height: 0; border: 3px solid transparent; border-top: 3px solid #000; border-bottom: 0; }
.caret.low { margin-top: 16px; }
.sep { width: 2px; height: 29px; background: #fff; border-left: 1px solid #8c8a84; }
.sep.tall { height: 24px; }
.grip { width: 3px; height: 24px; border: 1px solid #a8a49c; border-right-color: #fff; }
.fade { opacity: .45; }

.drop { flex: none; height: 20px; display: flex; align-items: center; justify-content: space-between; background: #fff; }
.d1 { width: 108px; padding-right: 3px; }
.d2 { width: 114px; margin-left: 9px; padding-right: 2px; }
.drop-btn { width: 15px; height: 16px; background: #dcd9d2; position: relative; }
.drop-btn::after { content: ""; position: absolute; left: 4px; top: 6px; border: 3px solid transparent; border-top: 3px solid #000; border-bottom: 0; }

.status { height: 19px; flex: none; display: flex; justify-content: flex-end; border-bottom: 1px solid #fff; }
.status-msg { width: 81px; padding: 2px 0 0 2px; border-left: 1px solid #8c8a84; font-size: 13px; font-weight: 700; white-space: nowrap; }

.work { flex: 1; min-height: 0; display: flex; border-top: 1px solid #c8c8c8; }
.rail { width: 28px; flex: none; display: flex; flex-direction: column; background: #808080; overflow: hidden; }
.tab {
  width: 27px;
  flex: none;
  display: flex;
  align-items: center;
  justify-content: center;
  background: #d4d0c8;
  border-radius: 4px 0 0 4px;
  border-bottom: 1px solid #555;
  border-top: 1px solid #fff;
}
.t1 { height: 40px; margin-top: 16px; }
.t2 { height: 41px; margin-top: 2px; }
.t3 { height: 44px; margin-top: 2px; }
.t4 { height: 40px; margin-top: 1px; }
.t5 { height: 42px; margin-top: 12px; }
.t6 { height: 41px; margin-top: 12px; }
.t7 { height: 41px; margin-top: 13px; }
.t8 { height: 41px; margin-top: 1px; }
.t9 { height: 42px; margin-top: 1px; }
.t10 { height: 27px; margin-top: 1px; justify-content: flex-start; padding-left: 4px; }
.spin { flex: 1; width: 28px; background: #d4d0c8; padding: 4px 0 0 4px; display: flex; flex-direction: column; gap: 1px; }
.spin-btn { width: 15px; height: 14px; background: #d4d0c8; border: 1px solid; border-color: #fff #555 #555 #fff; position: relative; }
.spin-btn::after { content: ""; position: absolute; left: 3px; top: 4px; border: 4px solid transparent; }
.spin-btn.up::after { border-bottom: 4px solid #999; border-top: 0; }
.spin-btn.dn::after { border-top: 4px solid #000; border-bottom: 0; }

.panel { width: 259px; flex: none; display: flex; flex-direction: column; padding: 0 6px 0 9px; }
.panel-h { height: 32px; flex: none; display: flex; align-items: flex-end; gap: 7px; padding: 0 0 5px 2px; font-size: 13px; font-weight: 700; }
.tree-box { width: 244px; height: 405px; flex: none; display: flex; flex-direction: column; background: #fff; border: 1px solid; border-color: #555 #e8e8e8 #e8e8e8 #555; }
.tree-head { height: 17px; flex: none; display: flex; align-items: center; gap: 14px; padding-left: 6px; background: #d4d0c8; border-bottom: 1px solid #555; }
.sort { width: 0; height: 0; border: 5px solid transparent; border-bottom: 7px solid #f4f2ee; border-top: 0; }
.tree { position: relative; flex: 1; min-height: 0; }
.row { height: 18px; display: flex; align-items: center; position: relative; white-space: nowrap; }
.vl { position: absolute; border-left: 1px dotted #777; }
.v0 { left: 9px; top: 9px; height: 72px; }
.v1 { left: 29px; top: 90px; height: 81px; }
.dot { width: 9px; margin-left: 10px; border-top: 1px dotted #777; }
.dot2 { width: 10px; margin-left: 30px; border-top: 1px dotted #777; }
.plus { width: 9px; height: 9px; margin-left: 5px; margin-right: 5px; background: #fff; border: 1px solid #808080; position: relative; z-index: 1; }
.plus::before { content: ""; position: absolute; left: 1px; top: 3px; width: 5px; height: 1px; background: #000; }
.plus::after { content: ""; position: absolute; left: 3px; top: 1px; width: 1px; height: 5px; background: #000; }
.plus.minus::after { display: none; }
.ni { margin-right: 3px; }
.tick { margin-right: 1px; margin-left: 1px; }
.cam { margin-right: 3px; }
.box { margin-right: 2px; }
.fi { margin-right: 3px; }
.lbl { display: block; }
.arg { margin-left: 8px; font: 10px "Liberation Mono", monospace; letter-spacing: -.15px; }
.gray { color: #a4a4a4; }
.red { color: #c25a5a; }
.blue-t { color: #3f5f9c; }
.hscroll { height: 17px; flex: none; display: flex; background: #d4d0c8; margin-top: auto; border-top: 1px solid #bbb; }
.sb-btn { width: 16px; border: 1px solid; border-color: #fff #555 #555 #fff; position: relative; }
.sb-btn::after { content: ""; position: absolute; top: 3px; left: 4px; border: 4px solid transparent; }
.sb-btn.left::after { border-right: 5px solid #000; border-left: 0; }
.sb-btn.right::after { border-left: 5px solid #000; border-right: 0; left: 6px; }
.sb-track { flex: 1; border-bottom: 1px solid #555; border-right: 1px solid #555; }
.sb-rest { width: 5px; background: #eeeae4; }
.splitter { height: 6px; flex: none; margin: 4px 0 0; display: flex; align-items: center; gap: 3px; }
.splitter i { flex: 1; height: 4px; border-top: 1px solid #999; border-bottom: 1px solid #999; }
.splitter b { width: 60px; height: 8px; border: 1px solid #888; border-radius: 2px; background: #f4f4f0; }
.acc { width: 237px; height: 17px; flex: none; margin: 4px 0 0 3px; padding-left: 10px; border: 1px solid #807e78; border-radius: 7px; display: flex; align-items: center; }
.acc + .acc { margin-top: 7px; }
.view { flex: 1; min-width: 0; border-left: 6px solid #d4d0c8; background: linear-gradient(#b6b8b9, #d4d5d6 35%, #e9eaea 75%, #ecedee); }

.stamp { position: absolute; left: 10px; top: 553px; }
.stamp-ug { fill: #e81818; font: italic 700 16px "Liberation Sans", sans-serif; }
.stamp-cn { fill: #e81818; font: 700 15px "Noto Sans CJK SC", sans-serif; }
.stamp-url { fill: #fff; stroke: #e81818; stroke-width: 2.500px; paint-order: stroke; font: 700 9.500px "Liberation Sans", sans-serif; letter-spacing: .2px; }
```
